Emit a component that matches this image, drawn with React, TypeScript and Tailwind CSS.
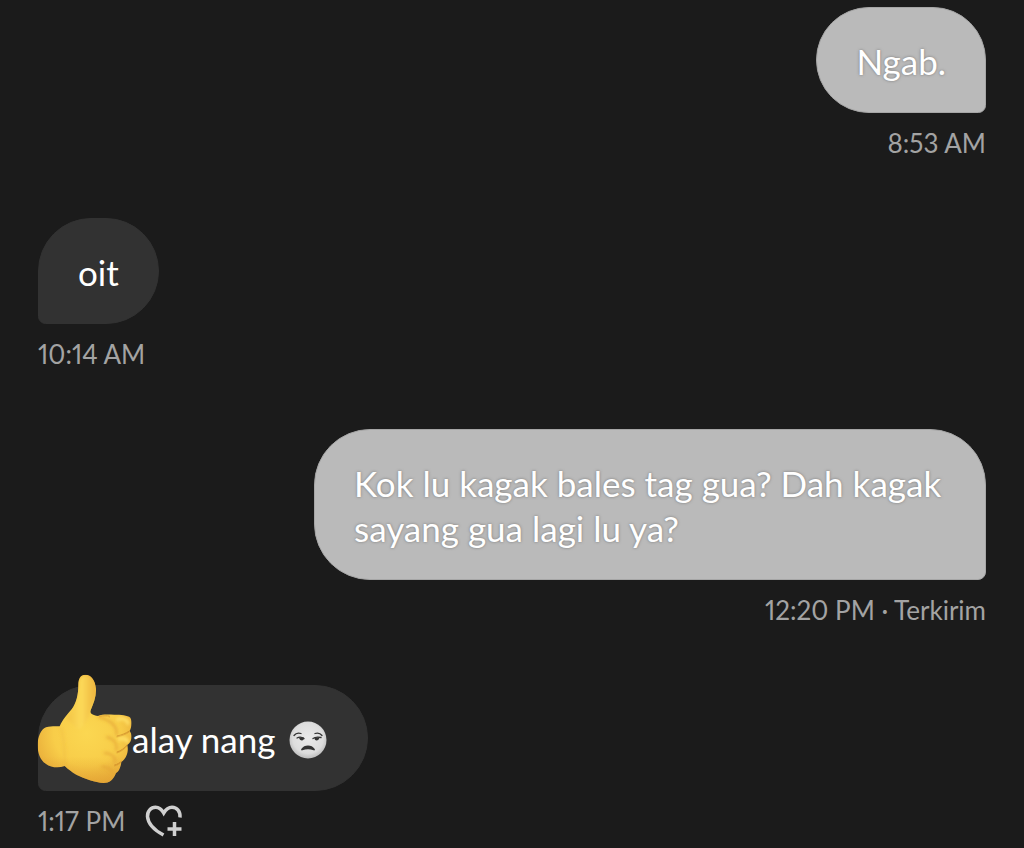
import React from "react";

type Side = "sent" | "received";

interface BubbleProps {
  side: Side;
  children: React.ReactNode;
  className?: string;
}

function Bubble({ side, children, className = "px-[39px]" }: BubbleProps) {
  const look =
    side === "sent"
      ? "self-end rounded-br-[8px] bg-[#bababa] border border-[#a6a6a6] [text-shadow:0_0_3px_#777777]"
      : "self-start rounded-bl-[8px] bg-[#323232] border border-[#323232]";

  return (
    <div
      className={`relative max-w-[672px] rounded-[56px] pt-[31px] pb-7 text-[35px] leading-[45px] text-white ${look} ${className}`}
    >
      {children}
    </div>
  );
}

function Meta({ side, children }: { side: Side; children: React.ReactNode }) {
  return (
    <div
      className={`mt-3 flex h-9 items-center gap-5 text-[26px] leading-9 text-[#a3a3a3] proportional-nums ${
        side === "sent" ? "self-end" : "self-start"
      }`}
    >
      {children}
    </div>
  );
}

function ThumbsUp() {
  return (
    <svg
      viewBox="36 27 288 330"
      className="absolute -left-0.5 -top-3 h-[110px] w-24"
      role="img"
      aria-label="thumbs up"
    >
      <defs>
        <radialGradient id="skin" gradientUnits="userSpaceOnUse" cx="185" cy="205" r="165">
          <stop offset="0" stopColor="#fbd751" />
          <stop offset="0.6" stopColor="#f8cd49" />
          <stop offset="1" stopColor="#e9ae3a" />
        </radialGradient>
        <linearGradient id="thumb" x1="0" y1="0" x2="1" y2="0">
          <stop offset="0" stopColor="#f3c346" />
          <stop offset="0.5" stopColor="#fcda58" />
          <stop offset="1" stopColor="#edb43e" />
        </linearGradient>
        <linearGradient id="palmShade" x1="0" y1="0" x2="0" y2="1">
          <stop offset="0.75" stopColor="#e09c30" stopOpacity="0" />
          <stop offset="1" stopColor="#e09c30" stopOpacity="0.6" />
        </linearGradient>
        <filter id="soft" x="-20%" y="-20%" width="140%" height="140%">
          <feGaussianBlur stdDeviation="4" />
        </filter>
        <clipPath id="hand">
          <path d="M104 184C113 163 126 150 140 133C154 115 160 89 160 60C160 40 167 29 181 29C199 30 211 45 213 72C214 95 205 116 197 136C194 146 201 149 219 153C232 147 250 149 268 149C287 149 308 150 316 158C322 168 320 187 314 198C322 207 323 230 307 240C311 257 307 279 289 291C287 309 280 321 273 324C265 345 252 354 236 354C210 352 180 342 154 329C140 321 130 313 119 303C101 309 80 309 62 296C45 285 38 265 38 240C38 216 47 194 63 187C77 183 91 184 104 184Z" />
        </clipPath>
      </defs>
      <g clipPath="url(#hand)">
        <rect x="36" y="27" width="288" height="330" fill="url(#skin)" />
        <path
          d="M124 160C150 130 160 100 160 60C160 40 167 29 181 29C199 30 211 45 213 72C214 95 205 116 197 136C190 160 180 185 160 195Z"
          fill="url(#thumb)"
          filter="url(#soft)"
        />
        <rect x="36" y="27" width="288" height="330" fill="url(#palmShade)" />
        <g fill="none" stroke="#e3a336" strokeWidth="5" filter="url(#soft)">
          <path d="M219 155C245 162 280 178 274 211" />
          <path d="M244 216C268 220 280 240 272 257" />
          <path d="M237 264C260 265 277 278 268 294" />
          <path d="M230 305C248 304 260 315 264 324" />
          <path d="M104 186C120 205 118 280 120 304" opacity="0.3" />
        </g>
        <g fill="none" stroke="#c57f24" strokeWidth="3" strokeLinecap="round">
          <path d="M276 214C290 211 303 206 313 199" />
          <path d="M276 262C289 258 299 250 307 240" />
          <path d="M269 301C277 299 284 295 289 290" />
        </g>
        <path d="M222 154C235 150 246 151 255 155" fill="none" stroke="#d79532" strokeWidth="3" />
        <path
          d="M278 163C291 158 306 162 309 175M283 222C297 219 305 221 307 229"
          fill="none"
          stroke="#ffe067"
          strokeWidth="10"
          strokeLinecap="round"
          filter="url(#soft)"
        />
      </g>
    </svg>
  );
}

function UnamusedFace() {
  return (
    <svg viewBox="0 0 38 38" className="h-[38px] w-[38px]" role="img" aria-label="unamused face">
      <defs>
        <radialGradient id="face" cx="0.5" cy="0.45" r="0.55">
          <stop offset="0" stopColor="#eaeaea" />
          <stop offset="0.75" stopColor="#dddddd" />
          <stop offset="1" stopColor="#bdbdbd" />
        </radialGradient>
      </defs>
      <circle cx="19" cy="19" r="18.5" fill="url(#face)" />
      <g fill="none" stroke="#333333" strokeLinecap="round" strokeLinejoin="round">
        <path d="M5 14.500C6.500 12.500 9 11.500 12 12.500M26 12.500C29 11.500 31.500 12.500 33 14.500" strokeWidth="1.300" />
        <path d="M8 17C10 15.800 13 16 15 17.500M24 17.500C26 16 29 15.800 32 16.500" strokeWidth="1.300" />
        <path d="M13 28.500C16 24.500 22 24.500 25 28.500C21 26.900 17 26.900 13 28.500Z" fill="#333333" strokeWidth="1.800" />
      </g>
      <path d="M10 16.500H15C15.500 20.500 10.500 20.500 10 16.500ZM25.500 16.500H30.500C30 20.500 25 20.500 25.500 16.500Z" fill="#333333" />
    </svg>
  );
}

function HeartPlus() {
  return (
    <svg viewBox="0 0 38 34" className="h-[34px] w-[38px]" fill="none" stroke="#d0d0d0" strokeWidth="3.500" aria-hidden="true">
      <path d="M18.500 31C10 26.500 3 20 2.500 12.500C2.200 7 6 3.300 10.500 3.300C14.500 3.300 17 6 18.700 9C20.500 6 23 3.300 27 3.300C32 3.300 35.500 7.500 35 13.500" />
      <path d="M29.500 18V32M22.500 25H36.500" />
    </svg>
  );
}

export default function App() {
  return (
    <main className="flex min-h-screen flex-col bg-[#1b1b1b] px-[38px] pt-[7px] font-[Lato,'Noto_Sans',sans-serif]">
      <section className="flex flex-col pb-[57px]">
        <Bubble side="sent">Ngab.</Bubble>
        <Meta side="sent">8:53 AM</Meta>
      </section>

      <section className="flex flex-col pb-[57px]">
        <Bubble side="received">oit</Bubble>
        <Meta side="received">10:14 AM</Meta>
      </section>

      <section className="flex flex-col pb-[57px]">
        <Bubble side="sent">Kok lu kagak bales tag gua? Dah kagak sayang gua lagi lu ya?</Bubble>
        <Meta side="sent">12:20 PM · Terkirim</Meta>
      </section>

      <section className="flex flex-col">
        <Bubble side="received" className="flex items-center gap-[14px] pl-[93px] pr-10">
          <ThumbsUp />
          <span>alay nang</span>
          <UnamusedFace />
        </Bubble>
        <Meta side="received">
          <span>1:17 PM</span>
          <button type="button" aria-label="Add reaction">
            <HeartPlus />
          </button>
        </Meta>
      </section>
    </main>
  );
}
